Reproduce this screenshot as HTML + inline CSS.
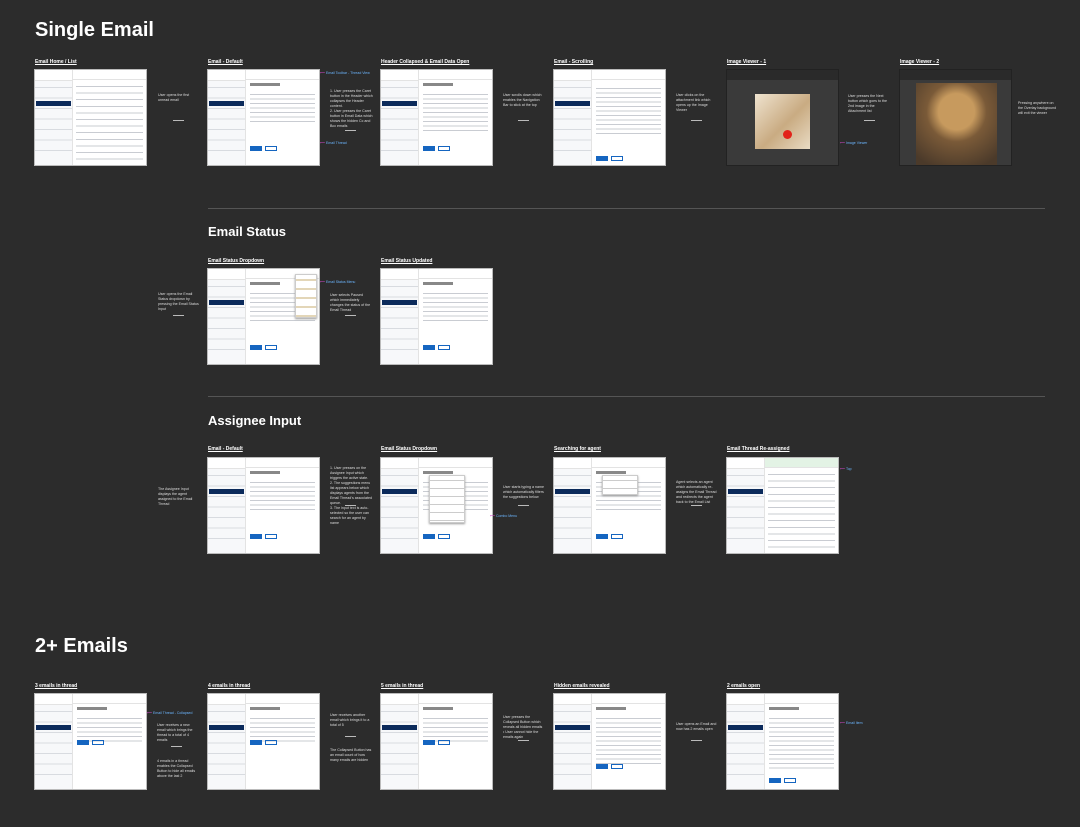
<!DOCTYPE html><html><head><meta charset="utf-8"><style>
*{box-sizing:border-box;margin:0;padding:0}
body{width:1080px;height:827px;background:#2c2c2c;position:relative;overflow:hidden;font-family:"Liberation Sans",sans-serif;color:#fff}
.h1{position:absolute;font-size:20px;font-weight:bold}
.h2{position:absolute;font-size:13px;font-weight:bold}
.lb{position:absolute;font-size:5px;font-weight:bold;text-decoration:underline;white-space:nowrap}
.d{position:absolute;font-size:3.6px;line-height:5px;color:#ddd;width:42px}
.ar{position:absolute;width:11px;height:1px;background:#bbb}
.ln{position:absolute;left:208px;width:837px;height:1px;background:#555}
.s{position:absolute;width:113px;height:97px;background:#fff;border:1px solid #bbb;overflow:hidden}
.sb{position:absolute;left:0;top:0;width:38px;height:100%;background:#f7f8fa;border-right:1px solid #e3e3e3;
background-image:repeating-linear-gradient(#f7f8fa 0 5px,#d8dbe0 5px 6px,#f7f8fa 6px 10.5px);background-position:0 12px;background-repeat:repeat-x;background-size:100% 70px}
.sb:before{content:"";position:absolute;left:0;top:0;width:100%;height:10px;background:#fff;border-bottom:1px solid #e3e3e3}
.sb:after{content:"";position:absolute;left:1px;top:31px;width:35px;height:5px;background:#0b2a5b}
.ct{position:absolute;left:38px;top:0;right:0;height:100%}
.tb{height:10px;border-bottom:1px solid #e3e3e3}
.tt{margin:3px 4px 0;height:3px;width:30px;background:#888}
.tx{margin:6px 4px 0;height:30px;background:repeating-linear-gradient(#fff 0 2px,#c9ccd2 2px 3px,#fff 3px 4.5px)}
.bt{position:absolute;left:4px;bottom:14px;width:12px;height:5px;background:#1565c0}
.bt2{position:absolute;left:19px;bottom:14px;width:12px;height:5px;border:1px solid #1565c0}
.lst{margin:3px 3px;height:80px;background:repeating-linear-gradient(#fff 0 3px,#c9ccd2 3px 4px,#fff 4px 6.6px)}
.dk{position:absolute;width:113px;height:97px;background:#3a3a3a;border:1px solid #222}
.dk .bar{height:10px;background:#2a2a2a}
.tag{position:absolute;font-size:3.5px;color:#6cb6ff;white-space:nowrap}
.tag:before{content:"⟵ ";color:#d048c8}
</style></head><body>
<div class="h1" style="left:35px;top:19px">Single Email</div>
<div class="h2" style="left:208px;top:224px">Email Status</div>
<div class="h2" style="left:208px;top:413px">Assignee Input</div>
<div class="h1" style="left:35px;top:635px">2+ Emails</div>
<div class="ln" style="top:208px"></div>
<div class="ln" style="top:396px"></div>

<!-- Row 1 -->
<div class="lb" style="left:35px;top:59px">Email Home / List</div>
<div class="s" style="left:34px;top:69px"><div class="sb"></div><div class="ct"><div class="tb"></div><div class="lst"></div></div></div>
<div class="d" style="left:158px;top:93px">User opens the first unread email</div>
<div class="ar" style="left:173px;top:120px"></div>

<div class="lb" style="left:208px;top:59px">Email - Default</div>
<div class="s" style="left:207px;top:69px"><div class="sb"></div><div class="ct"><div class="tb"></div><div class="tt"></div><div class="tx"></div><div class="bt"></div><div class="bt2"></div></div></div>
<div class="tag" style="left:320px;top:71px">Email Toolbar - Thread View</div>
<div class="tag" style="left:320px;top:141px">Email Thread</div>
<div class="d" style="left:330px;top:89px;width:45px">1. User presses the Caret button in the Header which collapses the Header content.<br>2. User presses the Caret button in Email Data which shows the hidden Cc and Bcc emails</div>
<div class="ar" style="left:345px;top:130px"></div>

<div class="lb" style="left:381px;top:59px">Header Collapsed &amp; Email Data Open</div>
<div class="s" style="left:380px;top:69px"><div class="sb"></div><div class="ct"><div class="tb"></div><div class="tt"></div><div class="tx" style="height:40px"></div><div class="bt"></div><div class="bt2"></div></div></div>
<div class="d" style="left:503px;top:93px">User scrolls down which enables the Navigation Bar to stick at the top</div>
<div class="ar" style="left:518px;top:120px"></div>

<div class="lb" style="left:554px;top:59px">Email - Scrolling</div>
<div class="s" style="left:553px;top:69px"><div class="sb"></div><div class="ct"><div class="tb"></div><div class="tx" style="height:50px"></div><div class="bt" style="bottom:4px"></div><div class="bt2" style="bottom:4px"></div></div></div>
<div class="d" style="left:676px;top:93px">User clicks on the attachment link which opens up the Image Viewer</div>
<div class="ar" style="left:691px;top:120px"></div>

<div class="lb" style="left:727px;top:59px">Image Viewer - 1</div>
<div class="dk" style="left:726px;top:69px"><div class="bar"></div>
<div style="position:absolute;left:28px;top:24px;width:55px;height:55px;background:linear-gradient(135deg,#efe3cf,#c9ab82 55%,#e9dcc4);"></div>
<div style="position:absolute;left:56px;top:60px;width:9px;height:9px;border-radius:50%;background:#e2231a"></div></div>
<div class="tag" style="left:840px;top:141px">Image Viewer</div>
<div class="d" style="left:848px;top:94px">User presses the Next button which goes to the 2nd image in the Attachment list</div>
<div class="ar" style="left:864px;top:120px"></div>

<div class="lb" style="left:900px;top:59px">Image Viewer - 2</div>
<div class="dk" style="left:899px;top:69px"><div class="bar"></div>
<div style="position:absolute;left:16px;top:13px;width:81px;height:82px;background:radial-gradient(circle at 50% 35%,#c79a5e 0 18px,#7a5a38 30px,#4b3a2a 60px)"></div></div>
<div class="d" style="left:1018px;top:101px;width:40px">Pressing anywhere on the Overlay background will exit the viewer</div>

<!-- Row 2 -->
<div class="d" style="left:158px;top:292px">User opens the Email Status dropdown by pressing the Email Status Input</div>
<div class="ar" style="left:173px;top:315px"></div>
<div class="lb" style="left:208px;top:258px">Email Status Dropdown</div>
<div class="s" style="left:207px;top:268px"><div class="sb"></div><div class="ct"><div class="tb"></div><div class="tt"></div><div class="tx"></div><div class="bt"></div><div class="bt2"></div>
<div style="position:absolute;right:2px;top:5px;width:22px;height:44px;background:#fff;border:1px solid #ccc;box-shadow:0 1px 2px #999;background-image:repeating-linear-gradient(#fff 0 4px,#e3d6b8 4px 6px,#fff 6px 9px)"></div></div></div>
<div class="tag" style="left:320px;top:280px">Email Status Menu</div>
<div class="d" style="left:330px;top:293px">User selects Paused which immediately changes the status of the Email Thread</div>
<div class="ar" style="left:345px;top:315px"></div>
<div class="lb" style="left:381px;top:258px">Email Status Updated</div>
<div class="s" style="left:380px;top:268px"><div class="sb"></div><div class="ct"><div class="tb"></div><div class="tt"></div><div class="tx"></div><div class="bt"></div><div class="bt2"></div></div></div>

<!-- Row 3 -->
<div class="d" style="left:158px;top:487px">The Assignee Input displays the agent assigned to the Email Thread</div>
<div class="lb" style="left:208px;top:446px">Email - Default</div>
<div class="s" style="left:207px;top:457px"><div class="sb"></div><div class="ct"><div class="tb"></div><div class="tt"></div><div class="tx"></div><div class="bt"></div><div class="bt2"></div></div></div>
<div class="d" style="left:330px;top:466px;width:45px">1. User presses on the Assignee Input which triggers the active state.<br>2. The suggestions menu list appears below which displays agents from the Email Thread's associated queue.<br>3. The input text is auto-selected so the user can search for an agent by name</div>
<div class="ar" style="left:345px;top:505px"></div>
<div class="lb" style="left:381px;top:446px">Email Status Dropdown</div>
<div class="s" style="left:380px;top:457px"><div class="sb"></div><div class="ct"><div class="tb"></div><div class="tt"></div><div class="tx"></div><div class="bt"></div><div class="bt2"></div>
<div style="position:absolute;left:10px;top:17px;width:36px;height:48px;background:#fff;border:1px solid #ccc;box-shadow:0 1px 2px #999;background-image:repeating-linear-gradient(#fff 0 4px,#ccc 4px 5px,#fff 5px 8px)"></div></div></div>
<div class="tag" style="left:490px;top:514px">Combo Menu</div>
<div class="d" style="left:503px;top:485px">User starts typing a name which automatically filters the suggestions below</div>
<div class="ar" style="left:518px;top:505px"></div>
<div class="lb" style="left:554px;top:446px">Searching for agent</div>
<div class="s" style="left:553px;top:457px"><div class="sb"></div><div class="ct"><div class="tb"></div><div class="tt"></div><div class="tx"></div><div class="bt"></div><div class="bt2"></div>
<div style="position:absolute;left:10px;top:17px;width:36px;height:20px;background:#fff;border:1px solid #ccc;box-shadow:0 1px 2px #999;background-image:repeating-linear-gradient(#fff 0 4px,#ccc 4px 5px,#fff 5px 8px)"></div></div></div>
<div class="d" style="left:676px;top:480px">Agent selects an agent which automatically re-assigns the Email Thread and redirects the agent back to the Email List</div>
<div class="ar" style="left:691px;top:505px"></div>
<div class="lb" style="left:727px;top:446px">Email Thread Re-assigned</div>
<div class="s" style="left:726px;top:457px"><div class="sb"></div><div class="ct"><div class="tb" style="background:#e3f3e5"></div><div class="lst"></div></div></div>
<div class="tag" style="left:840px;top:467px">Top</div>

<!-- Row 4 -->
<div class="lb" style="left:35px;top:683px">3 emails in thread</div>
<div class="s" style="left:34px;top:693px"><div class="sb"></div><div class="ct"><div class="tb"></div><div class="tt"></div><div class="tx" style="height:26px"></div><div class="bt" style="bottom:44px"></div><div class="bt2" style="bottom:44px"></div></div></div>
<div class="tag" style="left:147px;top:711px">Email Thread - Collapsed</div>
<div class="d" style="left:157px;top:723px">User receives a new email which brings the thread to a total of 4 emails</div>
<div class="ar" style="left:171px;top:746px"></div>
<div class="d" style="left:157px;top:759px">4 emails in a thread enables the Collapsed Button to hide all emails above the last 2</div>
<div class="lb" style="left:208px;top:683px">4 emails in thread</div>
<div class="s" style="left:207px;top:693px"><div class="sb"></div><div class="ct"><div class="tb"></div><div class="tt"></div><div class="tx" style="height:26px"></div><div class="bt" style="bottom:44px"></div><div class="bt2" style="bottom:44px"></div></div></div>
<div class="d" style="left:330px;top:713px">User receives another email which brings it to a total of 5</div>
<div class="ar" style="left:345px;top:736px"></div>
<div class="d" style="left:330px;top:748px">The Collapsed Button has an email count of how many emails are hidden</div>
<div class="lb" style="left:381px;top:683px">5 emails in thread</div>
<div class="s" style="left:380px;top:693px"><div class="sb"></div><div class="ct"><div class="tb"></div><div class="tt"></div><div class="tx" style="height:26px"></div><div class="bt" style="bottom:44px"></div><div class="bt2" style="bottom:44px"></div></div></div>
<div class="d" style="left:503px;top:715px">User presses the Collapsed Button which reveals all hidden emails<br>• User cannot hide the emails again</div>
<div class="ar" style="left:518px;top:740px"></div>
<div class="lb" style="left:554px;top:683px">Hidden emails revealed</div>
<div class="s" style="left:553px;top:693px"><div class="sb"></div><div class="ct"><div class="tb"></div><div class="tt"></div><div class="tx" style="height:50px"></div><div class="bt" style="bottom:20px"></div><div class="bt2" style="bottom:20px"></div></div></div>
<div class="d" style="left:676px;top:722px">User opens an Email and now has 2 emails open</div>
<div class="ar" style="left:691px;top:740px"></div>
<div class="lb" style="left:727px;top:683px">2 emails open</div>
<div class="s" style="left:726px;top:693px"><div class="sb"></div><div class="ct"><div class="tb"></div><div class="tt"></div><div class="tx" style="height:55px"></div><div class="bt" style="bottom:6px"></div><div class="bt2" style="bottom:6px"></div></div></div>
<div class="tag" style="left:840px;top:721px">Email Item</div>
</body></html>
